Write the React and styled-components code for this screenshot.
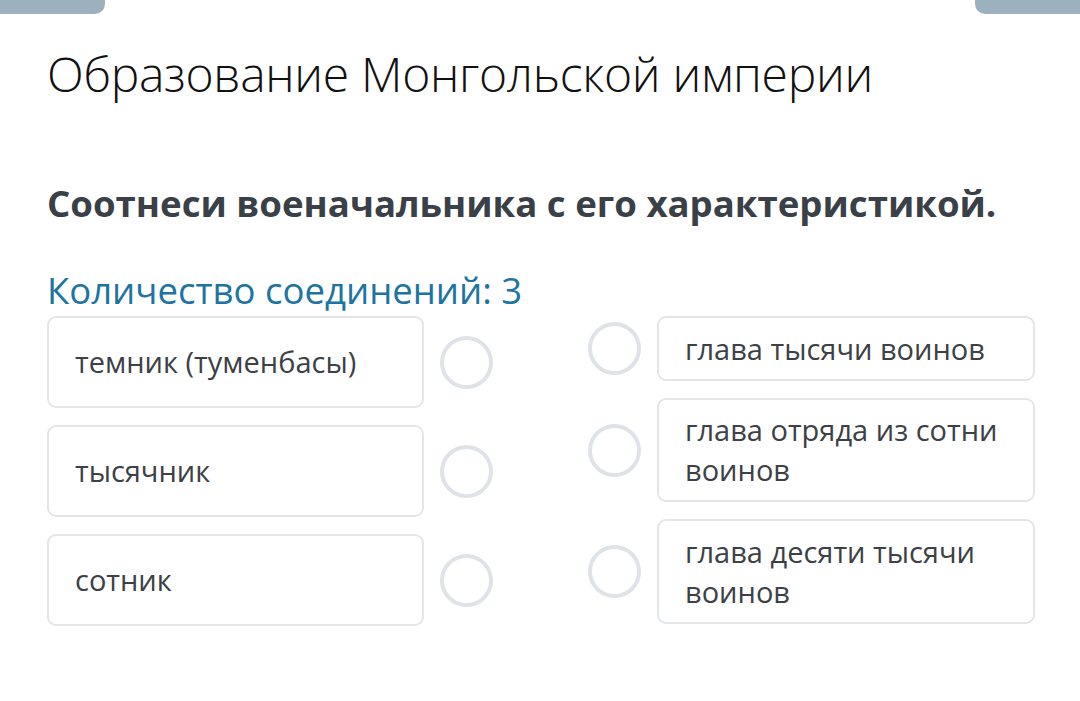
import React from 'react';
import styled, { createGlobalStyle } from 'styled-components';

const GlobalStyle = createGlobalStyle`
  html, body {
    margin: 0;
    padding: 0;
    background: #ffffff;
    font-family: "Open Sans", "Noto Sans", sans-serif;
  }
`;

const Page = styled.div`
  width: 1080px;
  height: 701px;
  position: relative;
  overflow: hidden;
  background: #fff;
  box-sizing: border-box;
  padding: 0 45px 0 47px;
`;

const Tab = styled.div`
  position: absolute;
  top: 0;
  width: 105px;
  height: 14px;
  background: #9db0bd;
  ${(p) => (p.right ? 'right: 0; border-bottom-left-radius: 10px;' : 'left: 0; border-bottom-right-radius: 10px;')}
`;

const Title = styled.h1`
  margin: 0;
  padding-top: 43px;
  font-size: 48px;
  line-height: 62px;
  font-weight: 350;
  letter-spacing: -0.3px;
  color: #111;
  white-space: nowrap;
`;

const Question = styled.h2`
  margin: 75px 0 0;
  font-size: 36.6px;
  line-height: 46px;
  font-weight: 700;
  color: #3a4047;
  white-space: nowrap;
`;

const Count = styled.div`
  margin-top: 42px;
  font-size: 36.5px;
  line-height: 44px;
  color: #1d74a2;
`;

const Board = styled.div`
  display: flex;
  justify-content: space-between;
  margin-top: 4px;
`;

const Column = styled.div`
  display: flex;
  flex-direction: column;
  gap: 17px;
`;

const Row = styled.div`
  display: flex;
  align-items: center;
  gap: 16px;
`;

const Card = styled.div`
  box-sizing: border-box;
  width: ${(p) => p.w}px;
  min-height: ${(p) => p.h}px;
  display: flex;
  align-items: center;
  padding: 10px 18px 10px 26px;
  border: 2px solid #e3e6e9;
  border-radius: 9px;
  font-size: 29px;
  line-height: 40px;
  color: #3c4146;
`;

const Dot = styled.div`
  box-sizing: border-box;
  flex: none;
  width: 53px;
  height: 53px;
  border-radius: 50%;
  border: 4px solid #dfe3e7;
`;

const left = ['темник (туменбасы)', 'тысячник', 'сотник'];
const right = [
  { text: 'глава тысячи воинов', h: 65 },
  { text: 'глава отряда из сотни воинов', h: 104 },
  { text: 'глава десяти тысячи воинов', h: 105 },
];

export default function App() {
  return (
    <>
      <GlobalStyle />
      <Page>
        <Tab />
        <Tab right />
        <Title>Образование Монгольской империи</Title>
        <Question>Соотнеси военачальника с его характеристикой.</Question>
        <Count>Количество соединений: 3</Count>
        <Board>
          <Column>
            {left.map((t) => (
              <Row key={t}>
                <Card w={377} h={92}>{t}</Card>
                <Dot />
              </Row>
            ))}
          </Column>
          <Column>
            {right.map((r) => (
              <Row key={r.text}>
                <Dot />
                <Card w={378} h={r.h}>{r.text}</Card>
              </Row>
            ))}
          </Column>
        </Board>
      </Page>
    </>
  );
}
